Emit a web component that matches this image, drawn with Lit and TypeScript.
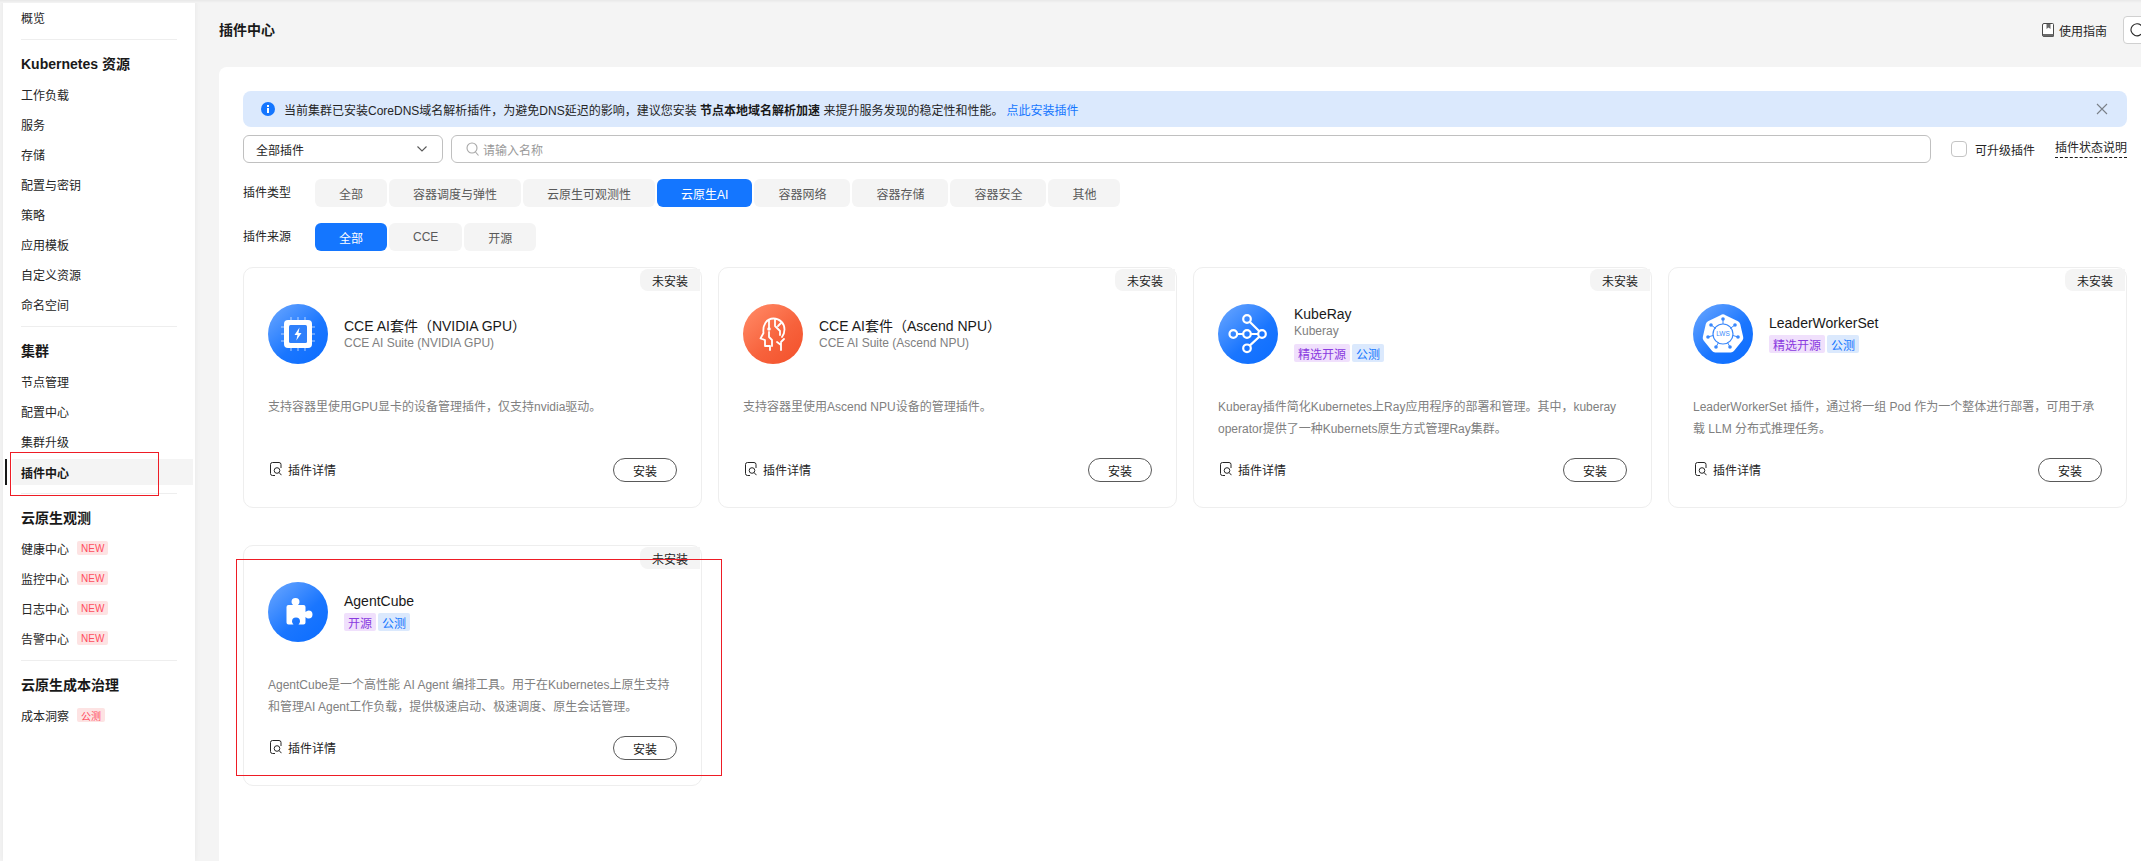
import { LitElement, html, css, svg } from "lit";
import { customElement } from "lit/decorators.js";

type Card = { icon: string; title: string; sub?: string; tags?: [string, string][]; desc: string };

const CARDS: Card[] = [
  { icon: "chip", title: "CCE AI套件（NVIDIA GPU）", sub: "CCE AI Suite (NVIDIA GPU)", desc: "支持容器里使用GPU显卡的设备管理插件，仅支持nvidia驱动。" },
  { icon: "brain", title: "CCE AI套件（Ascend NPU）", sub: "CCE AI Suite (Ascend NPU)", desc: "支持容器里使用Ascend NPU设备的管理插件。" },
  { icon: "ray", title: "KubeRay", sub: "Kuberay", tags: [["精选开源", "purple"], ["公测", "blue"]], desc: "Kuberay插件简化Kubernetes上Ray应用程序的部署和管理。其中，kuberay operator提供了一种Kubernets原生方式管理Ray集群。" },
  { icon: "lws", title: "LeaderWorkerSet", tags: [["精选开源", "purple"], ["公测", "blue"]], desc: "LeaderWorkerSet 插件，通过将一组 Pod 作为一个整体进行部署，可用于承载 LLM 分布式推理任务。" },
  { icon: "puzzle", title: "AgentCube", tags: [["开源", "purple"], ["公测", "blue"]], desc: "AgentCube是一个高性能 AI Agent 编排工具。用于在Kubernetes上原生支持和管理AI Agent工作负载，提供极速启动、极速调度、原生会话管理。" },
];

const TYPES = ["全部", "容器调度与弹性", "云原生可观测性", "云原生AI", "容器网络", "容器存储", "容器安全", "其他"];
const SOURCES = ["全部", "CCE", "开源"];

function glyph(kind: string) {
  switch (kind) {
    case "chip":
      return svg`
        <g stroke="#fff" stroke-opacity=".65" stroke-width="1" fill="none">
          <path d="M23 13v3M30 13v3M37 13v3M23 44v3M30 44v3M37 44v3M13 23h3M13 30h3M13 37h3M44 23h3M44 30h3M44 37h3"/>
        </g>
        <rect x="16" y="16" width="28" height="28" rx="4" fill="#fff"/>
        <rect x="21" y="21" width="18" height="18" rx="1.5" fill="#2f80fb"/>
        <path d="M31.5 23.5 26.5 31h3l-1.2 5.5L33.5 29h-3z" fill="#fff"/>`;
    case "brain":
      return svg`
        <g fill="none" stroke="#fff" stroke-width="1.8" stroke-linecap="round" stroke-linejoin="round">
          <path d="M27 46v-4h-5v-6l-4.500-1.500 3-5.500c-1-8 3-14.500 10-14.500 6.500 0 11 5 11 11 0 3-1 5.500-2.500 7.500"/>
          <path d="M26 16.500V24M32 15.500V22l5 5v4M38 19l-3 3"/>
          <path d="M26 28v5l3 3v6"/>
          <path d="M38 46v-7M38 41l-4-3M38 38l3-3"/>
        </g>
        <circle cx="26" cy="25" r="1.800" fill="#fff"/>`;
    case "ray":
      return svg`
        <g fill="none" stroke="#fff" stroke-width="2.200">
          <path d="M18.800 30h6.400M32.800 30h7.400M31.700 17.700 41.300 27.300M31.700 41.600 41.300 32.700"/>
          <circle cx="29" cy="15" r="3.800"/>
          <circle cx="15.300" cy="30" r="3.800"/>
          <circle cx="29" cy="30" r="3.800"/>
          <circle cx="44" cy="30" r="3.800"/>
          <circle cx="29" cy="44.300" r="3.800"/>
        </g>`;
    case "lws":
      return svg`
        <path d="M27.500 11.200a4 4 0 0 1 5 0l12.500 6a4 4 0 0 1 2.200 2.800l3 13a4 4 0 0 1-.8 3.400l-8.500 10.700a4 4 0 0 1-3.100 1.500H22.200a4 4 0 0 1-3.100-1.500L10.600 36.400a4 4 0 0 1-.8-3.400l3-13A4 4 0 0 1 15 17.200z" fill="#fff"/>
        <g stroke="#3a88fb" stroke-width="1" fill="none">
          <path d="M30 15v5M18 21l5 3.500M42 21l-5 3.500M15 33l5-1.500M45 33l-5-1.500M23 43l2.500-4.500M37 43l-2.500-4.500"/>
          <circle cx="30" cy="30" r="10" stroke-width="1.200"/>
        </g>
        <g fill="#3a88fb">
          <circle cx="30" cy="15" r="1.800"/><circle cx="18" cy="21" r="1.800"/><circle cx="42" cy="21" r="1.800"/>
          <circle cx="15" cy="33" r="1.800"/><circle cx="45" cy="33" r="1.800"/><circle cx="23" cy="43" r="1.800"/><circle cx="37" cy="43" r="1.800"/>
        </g>
        <text x="30" y="32.400" text-anchor="middle" font-size="6.500" font-family="Liberation Sans" fill="#3a88fb">LWS</text>`;
    default:
      return svg`<path d="M20.500 23H25c-1-1-1.500-2-1.500-3a4 4 0 0 1 8 0c0 1-.5 2-1.500 3h5.500a2 2 0 0 1 2 2v5c1-1 2-1.500 3-1.500a4 4 0 0 1 0 8c-1 0-2-.5-3-1.500v5.500a2 2 0 0 1-2 2h-5c1-1 1.500-2 1.500-3a4 4 0 0 0-8 0c0 1 .5 2 1.500 3h-5a2 2 0 0 1-2-2V25a2 2 0 0 1 2-2z" fill="#fff"/>`;
  }
}

function logo(kind: string) {
  const orange = kind === "brain";
  return html`<svg class="logo" width="60" height="60" viewBox="0 0 60 60">
    <defs>
      <linearGradient id="g-${kind}" x1="0.15" y1="0.1" x2="0.85" y2="0.9">
        <stop offset="0" stop-color=${orange ? "#ff8460" : "#5c9eff"}></stop>
        <stop offset="0.6" stop-color=${orange ? "#f7623c" : "#1a76ff"}></stop>
        <stop offset="1" stop-color=${orange ? "#f4552f" : "#0f6fff"}></stop>
      </linearGradient>
    </defs>
    <circle cx="30" cy="30" r="30" fill="url(#g-${kind})"></circle>
    ${glyph(kind)}
  </svg>`;
}

@customElement("app-root")
export class AppRoot extends LitElement {
  static styles = css`
    :host {
      display: block;
      width: 2141px;
      height: 861px;
      font-family: "Liberation Sans", "Noto Sans CJK SC", sans-serif;
      font-size: 12px;
      color: #191919;
    }
    * { box-sizing: border-box; }
    .page { position: relative; display: flex; width: 2141px; height: 861px; overflow: hidden; background: #f4f4f4; padding-left: 3px; }
    .page::before { content: ""; position: absolute; left: 0; right: 0; top: 0; height: 3px; background: linear-gradient(#e8e8e8, #f4f4f4); z-index: 3; }
    .side { flex: none; display: flex; flex-direction: column; width: 192px; background: #fff; padding-top: 2px; box-shadow: 0 0 6px rgba(0, 0, 0, .06); position: relative; z-index: 1; }
    .item { flex: none; position: relative; display: flex; align-items: center; gap: 8px; height: 26px; margin: 2px 2px 2px 9px; padding-left: 9px; color: #252525; }
    .item.active { margin-top: 3px; margin-bottom: 1px; background: #f4f4f4; font-weight: 700; color: #191919; }
    .item.active::before { content: ""; position: absolute; left: -7px; top: 0; bottom: 0; width: 2px; background: #191919; }
    .rule { flex: none; height: 1px; margin: 7px 18px 8px; background: #eeeeee; }
    .head { flex: none; display: flex; align-items: center; height: 30px; margin: 0 2px 1px 18px; font-size: 14px; font-weight: 700; color: #191919; }
    .badge { display: inline-flex; align-items: center; height: 14px; padding: 0 4px; border-radius: 2px; font-size: 10px; font-weight: 400; background: #fde3e3; color: #ff4d5e; }

    .main { flex: 1; min-width: 0; display: flex; flex-direction: column; padding-left: 24px; }
    .top { flex: none; display: flex; align-items: center; height: 60px; margin-bottom: 7px; }
    .top h1 { flex: 1; margin: 0 0 2px; font-size: 14px; font-weight: 700; }
    .help { display: flex; align-items: center; gap: 5px; color: #252525; }
    .refresh { flex: none; display: flex; align-items: center; width: 32px; height: 28px; margin: 0 -14px 0 16px; padding-left: 6px; background: #fff; border: 1px solid #d0d0d0; border-radius: 4px; }

    .panel { flex: 1; display: flex; flex-direction: column; background: #fff; border-radius: 8px 0 0 0; padding: 24px 14px 0 24px; }
    .alert { flex: none; display: flex; align-items: center; height: 36px; background: #dbe9fd; border-radius: 8px; padding: 0 19px 0 18px; color: #252525; }
    .alert .msg { flex: 1; margin-left: 9px; white-space: pre; }
    .alert b { font-weight: 700; color: #191919; }
    .alert .link { margin-left: 3px; color: #1476ff; }
    .filters { flex: none; display: flex; align-items: center; margin-top: 8px; height: 28px; }
    .select { flex: none; display: flex; align-items: center; justify-content: space-between; width: 200px; height: 28px; padding: 0 15px 0 12px; border: 1px solid #c0c0c0; border-radius: 6px; color: #252525; }
    .search { flex: 1; display: flex; align-items: center; gap: 4px; height: 28px; margin-left: 8px; padding-left: 14px; border: 1px solid #c0c0c0; border-radius: 6px; color: #9a9a9a; }
    .check { flex: none; width: 16px; height: 16px; margin-left: 20px; border: 1px solid #c4c4c4; border-radius: 4px; }
    .check-label { margin-left: 8px; color: #252525; }
    .status { margin-left: 20px; padding-bottom: 1px; color: #252525; border-bottom: 1px dashed #191919; line-height: 16px; }
    .row { flex: none; display: flex; align-items: center; margin-top: 16px; height: 28px; }
    .row .label { flex: none; width: 72px; margin-bottom: 3px; color: #252525; }
    .tabs { display: flex; gap: 2px; }
    .tab { display: flex; align-items: center; height: 28px; padding: 0 24px; border-radius: 6px; background: #f4f4f4; color: #595959; }
    .tab.on { background: #1476ff; color: #fff; }

    .grid { display: grid; grid-template-columns: repeat(4, 459px); grid-auto-rows: 241px; column-gap: 16px; row-gap: 37px; margin-top: 16px; }
    .card { position: relative; display: flex; flex-direction: column; border: 1px solid #eeeeee; border-radius: 10px; padding: 36px 24px 25px; background: #fff; }
    .state { position: absolute; top: 1px; right: 1px; display: flex; align-items: center; justify-content: center; width: 60px; height: 22px; background: #f4f4f4; border-radius: 8px 0 0 8px; color: #252525; }
    .card-head { flex: none; display: flex; align-items: center; gap: 16px; height: 60px; }
    .logo { flex: none; display: block; }
    .info { display: flex; flex-direction: column; margin-bottom: 2px; }
    .name { font-size: 14px; line-height: 20px; color: #191919; }
    .en { line-height: 14px; color: #808080; }
    .en + .tags { margin-top: 6px; }
    .tags { display: flex; gap: 2px; margin-top: 2px; }
    .tag { display: flex; align-items: center; height: 18px; padding: 0 4px; border-radius: 2px; }
    .tag.purple { background: #f0e0fc; color: #8a3ae0; }
    .tag.blue { background: #dbe9fd; color: #1476ff; }
    .desc { margin: 32px 0 0; line-height: 22.400px; color: #808080; }
    .foot { margin-top: auto; display: flex; align-items: center; justify-content: space-between; height: 24px; }
    .detail { display: flex; align-items: center; gap: 6px; margin-bottom: 2px; padding-left: 2px; color: #252525; }
    .install { display: flex; align-items: center; justify-content: center; width: 64px; height: 24px; border: 1px solid #595959; border-radius: 12px; color: #191919; }

    .mark { position: absolute; border: 1px solid #ee1c25; pointer-events: none; z-index: 4; }
    .mark.a { left: 10px; top: 452px; width: 149px; height: 44px; }
    .mark.b { left: 236px; top: 559px; width: 486px; height: 217px; }
  `;

  private card(c: Card) {
    return html`<div class="card">
      <div class="state">未安装</div>
      <div class="card-head">
        ${logo(c.icon)}
        <div class="info">
          <div class="name">${c.title}</div>
          ${c.sub ? html`<div class="en">${c.sub}</div>` : ""}
          ${c.tags
            ? html`<div class="tags">${c.tags.map(([t, k]) => html`<span class="tag ${k}">${t}</span>`)}</div>`
            : ""}
        </div>
      </div>
      <p class="desc">${c.desc}</p>
      <div class="foot">
        <span class="detail">
          <svg width="12" height="14" viewBox="0 0 12 14" fill="none" stroke="#252525" stroke-width="1">
            <path d="M11 6V2.500A2 2 0 0 0 9 .5H2.500a2 2 0 0 0-2 2v9a2 2 0 0 0 2 2H5"/>
            <circle cx="7" cy="8.500" r="2.800"/>
            <path d="M9 10.500l2.500 2.700"/>
          </svg>
          插件详情
        </span>
        <span class="install">安装</span>
      </div>
    </div>`;
  }

  render() {
    const it = (t: string, b?: string, active = false) =>
      html`<div class="item ${active ? "active" : ""}">${t}${b ? html`<span class="badge">${b}</span>` : ""}</div>`;
    return html`<div class="page">
      <aside class="side">
        ${it("概览")}
        <div class="rule"></div>
        <div class="head">Kubernetes 资源</div>
        ${["工作负载", "服务", "存储", "配置与密钥", "策略", "应用模板", "自定义资源", "命名空间"].map((t) => it(t))}
        <div class="rule"></div>
        <div class="head">集群</div>
        ${it("节点管理")}${it("配置中心")}${it("集群升级")}${it("插件中心", undefined, true)}
        <div class="rule"></div>
        <div class="head">云原生观测</div>
        ${it("健康中心", "NEW")}${it("监控中心", "NEW")}${it("日志中心", "NEW")}${it("告警中心", "NEW")}
        <div class="rule"></div>
        <div class="head">云原生成本治理</div>
        ${it("成本洞察", "公测")}
      </aside>
      <main class="main">
        <header class="top">
          <h1>插件中心</h1>
          <span class="help">
            <svg width="12" height="14" viewBox="0 0 12 14">
              <path d="M2 .5h8.500a1 1 0 0 1 1 1V13a.5.5 0 0 1-.5.5H2A1.500 1.500 0 0 1 .5 12V2A1.500 1.500 0 0 1 2 .5z" fill="#fff" stroke="#4a4a4a"/>
              <path d="M1 11h10.500v2.500H2A1.300 1.300 0 0 1 1 12z" fill="#6a6a6a"/>
              <path d="M4.500 1h4v5L6.500 4.600 4.500 6z" fill="#6a6a6a"/>
            </svg>
            使用指南
          </span>
          <span class="refresh">
            <svg width="14" height="14" viewBox="0 0 14 14" fill="none" stroke="#252525" stroke-width="1.100"><path d="M12 3.500A6 6 0 1 0 13 7"/></svg>
          </span>
        </header>
        <section class="panel">
          <div class="alert">
            <svg width="14" height="14" viewBox="0 0 14 14">
              <circle cx="7" cy="7" r="7" fill="#1476ff"></circle>
              <rect x="6" y="6" width="2" height="5" fill="#fff"></rect>
              <rect x="6" y="3" width="2" height="2" fill="#fff"></rect>
            </svg>
            <span class="msg">当前集群已安装CoreDNS域名解析插件，为避免DNS延迟的影响，建议您安装 <b>节点本地域名解析加速</b> 来提升服务发现的稳定性和性能。<span class="link">点此安装插件</span></span>
            <svg width="12" height="12" viewBox="0 0 12 12" fill="none" stroke="#7a8088" stroke-width="1.100"><path d="M1 1l10 10M11 1L1 11"/></svg>
          </div>
          <div class="filters">
            <div class="select">
              全部插件
              <svg width="10" height="6" viewBox="0 0 10 6" fill="none" stroke="#595959" stroke-width="1.100"><path d="M.5.5 5 5 9.500.5"/></svg>
            </div>
            <div class="search">
              <svg width="13" height="14" viewBox="0 0 13 14" fill="none" stroke="#a8a8a8" stroke-width="1.100"><circle cx="6" cy="6" r="5"/><path d="M9.500 10l3 3.500"/></svg>
              请输入名称
            </div>
            <span class="check"></span>
            <span class="check-label">可升级插件</span>
            <span class="status">插件状态说明</span>
          </div>
          <div class="row">
            <span class="label">插件类型</span>
            <div class="tabs">${TYPES.map((t) => html`<span class="tab ${t === "云原生AI" ? "on" : ""}">${t}</span>`)}</div>
          </div>
          <div class="row">
            <span class="label">插件来源</span>
            <div class="tabs">${SOURCES.map((t) => html`<span class="tab ${t === "全部" ? "on" : ""}">${t}</span>`)}</div>
          </div>
          <div class="grid">${CARDS.map((c) => this.card(c))}</div>
        </section>
      </main>
      <div class="mark a"></div>
      <div class="mark b"></div>
    </div>`;
  }
}
